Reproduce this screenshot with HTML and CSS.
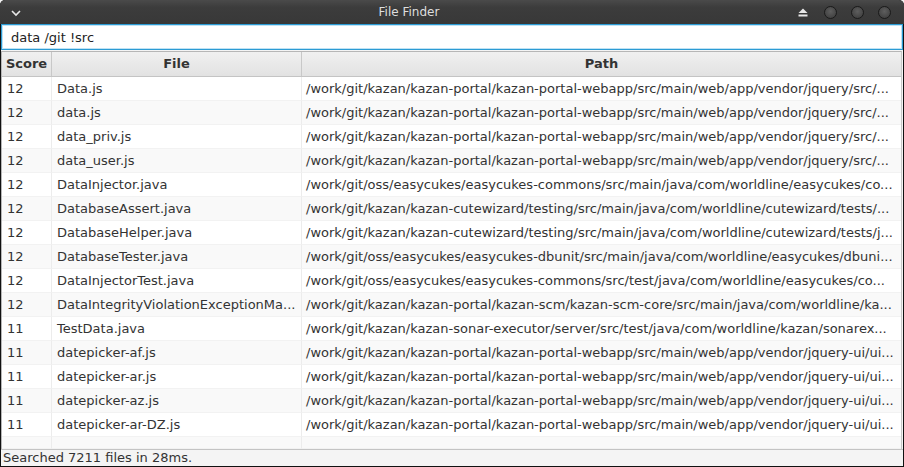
FILE: index.html
```html
<!DOCTYPE html>
<html>
<head>
<meta charset="utf-8">
<link rel="stylesheet" href="styles.css">
</head>
<body>
<div class="window">
  <div class="titlebar">
    <svg class="menu-icon" width="12" height="8" viewBox="0 0 12 8"><path d="M2 2 L6 6 L10 2" fill="none" stroke="#e8e8e8" stroke-width="1.6"/></svg>
    <div class="title">File Finder</div>
    <div class="controls">
      <svg class="eject" width="10" height="9" viewBox="0 0 10 9"><path d="M5 0.5 L9.5 5 L0.5 5 Z" fill="#e8e8e8"/><rect x="0.5" y="6.5" width="9" height="2" fill="#e8e8e8"/></svg>
      <span class="dot"></span>
      <span class="dot"></span>
      <span class="dot"></span>
    </div>
  </div>
  <div class="content">
    <div class="search">data /git !src</div>
    <div class="table">
      <div class="thead">
        <div class="c score">Score</div>
        <div class="c file">File</div>
        <div class="c path">Path</div>
      </div>
      <div class="tbody">
        <div class="row"><div class="c score">12</div><div class="c file">Data.js</div><div class="c path">/work/git/kazan/kazan-portal/kazan-portal-webapp/src/main/web/app/vendor/jquery/src/...</div></div>
        <div class="row"><div class="c score">12</div><div class="c file">data.js</div><div class="c path">/work/git/kazan/kazan-portal/kazan-portal-webapp/src/main/web/app/vendor/jquery/src/...</div></div>
        <div class="row"><div class="c score">12</div><div class="c file">data_priv.js</div><div class="c path">/work/git/kazan/kazan-portal/kazan-portal-webapp/src/main/web/app/vendor/jquery/src/...</div></div>
        <div class="row"><div class="c score">12</div><div class="c file">data_user.js</div><div class="c path">/work/git/kazan/kazan-portal/kazan-portal-webapp/src/main/web/app/vendor/jquery/src/...</div></div>
        <div class="row"><div class="c score">12</div><div class="c file">DataInjector.java</div><div class="c path">/work/git/oss/easycukes/easycukes-commons/src/main/java/com/worldline/easycukes/co...</div></div>
        <div class="row"><div class="c score">12</div><div class="c file">DatabaseAssert.java</div><div class="c path">/work/git/kazan/kazan-cutewizard/testing/src/main/java/com/worldline/cutewizard/tests/...</div></div>
        <div class="row"><div class="c score">12</div><div class="c file">DatabaseHelper.java</div><div class="c path">/work/git/kazan/kazan-cutewizard/testing/src/main/java/com/worldline/cutewizard/tests/j...</div></div>
        <div class="row"><div class="c score">12</div><div class="c file">DatabaseTester.java</div><div class="c path">/work/git/oss/easycukes/easycukes-dbunit/src/main/java/com/worldline/easycukes/dbuni...</div></div>
        <div class="row"><div class="c score">12</div><div class="c file">DataInjectorTest.java</div><div class="c path">/work/git/oss/easycukes/easycukes-commons/src/test/java/com/worldline/easycukes/co...</div></div>
        <div class="row"><div class="c score">12</div><div class="c file">DataIntegrityViolationExceptionMa...</div><div class="c path">/work/git/kazan/kazan-portal/kazan-scm/kazan-scm-core/src/main/java/com/worldline/ka...</div></div>
        <div class="row"><div class="c score">11</div><div class="c file">TestData.java</div><div class="c path">/work/git/kazan/kazan-sonar-executor/server/src/test/java/com/worldline/kazan/sonarex...</div></div>
        <div class="row"><div class="c score">11</div><div class="c file">datepicker-af.js</div><div class="c path">/work/git/kazan/kazan-portal/kazan-portal-webapp/src/main/web/app/vendor/jquery-ui/ui...</div></div>
        <div class="row"><div class="c score">11</div><div class="c file">datepicker-ar.js</div><div class="c path">/work/git/kazan/kazan-portal/kazan-portal-webapp/src/main/web/app/vendor/jquery-ui/ui...</div></div>
        <div class="row"><div class="c score">11</div><div class="c file">datepicker-az.js</div><div class="c path">/work/git/kazan/kazan-portal/kazan-portal-webapp/src/main/web/app/vendor/jquery-ui/ui...</div></div>
        <div class="row"><div class="c score">11</div><div class="c file">datepicker-ar-DZ.js</div><div class="c path">/work/git/kazan/kazan-portal/kazan-portal-webapp/src/main/web/app/vendor/jquery-ui/ui...</div></div>
        <div class="row filler"><div class="c score"></div><div class="c file"></div><div class="c path"></div></div>
      </div>
    </div>
    <div class="status">Searched 7211 files in 28ms.</div>
  </div>
</div>
</body>
</html>
```

FILE: styles.css
```css
html, body {
  margin: 0;
  padding: 0;
  background: #f4f4f4;
}
body {
  width: 904px;
  height: 467px;
  overflow: hidden;
  font-family: "DejaVu Sans", sans-serif;
  font-size: 12px;
}
.window {
  width: 904px;
  height: 467px;
  box-sizing: border-box;
  background: #111;
  border-radius: 5px 5px 0 0;
  display: flex;
  flex-direction: column;
  overflow: hidden;
}
.titlebar {
  height: 24px;
  flex: none;
  position: relative;
  display: flex;
  align-items: center;
  background: linear-gradient(#4a4a4a, #3c3c3c 30%, #383838);
  border-radius: 5px 5px 0 0;
  color: #dedede;
}
.menu-icon {
  margin-left: 10px;
  margin-top: 1px;
  flex: none;
}
.title {
  flex: 1;
  text-align: center;
  font-size: 12px;
  margin-right: 108px;
}
.controls {
  position: absolute;
  right: 0;
  top: 0;
  height: 24px;
  display: flex;
  align-items: center;
  gap: 14px;
  padding-right: 13px;
}
.eject {
  margin-right: 2px;
}
.dot {
  width: 13px;
  height: 13px;
  box-sizing: border-box;
  border-radius: 50%;
  background: radial-gradient(circle at 50% 40%, #5e5e5e, #444 70%);
  border: 1px solid #1a1a1a;
}
.content {
  flex: 1;
  margin: 0 1px 1px 1px;
  background: #f4f4f4;
  display: flex;
  flex-direction: column;
  min-height: 0;
}
.search {
  height: 26px;
  box-sizing: border-box;
  border: 1px solid #2b9bd4;
  box-shadow: inset 0 0 0 1px #bfe2f4;
  background: #fff;
  padding: 5px 0 0 9px;
  font-size: 13px;
  color: #222;
  flex: none;
}
.table {
  flex: 1;
  margin: 1px 1px 0 0;
  border: 1px solid #b6b6b6;
  border-bottom: none;
  border-right-color: #c8c8c8;
  background: #fff;
  display: flex;
  flex-direction: column;
  min-height: 0;
  overflow: hidden;
}
.thead {
  display: flex;
  height: 24px;
  flex: none;
  background: linear-gradient(#f0f0f0, #e2e2e2);
  border-bottom: 1px solid #c4c4c4;
  font-weight: bold;
  color: #333;
  font-size: 13px;
}
.thead .c {
  text-align: center;
  line-height: 24px;
  border-right: 1px solid #c8c8c8;
}
.thead .path {
  border-right: none;
}
.c {
  box-sizing: border-box;
  white-space: nowrap;
  overflow: hidden;
}
.score { width: 50px; flex: none; }
.file { width: 250px; flex: none; }
.path { flex: 1; }
.tbody {
  flex: 1;
  display: flex;
  flex-direction: column;
}
.row {
  display: flex;
  height: 24px;
  flex: none;
  font-size: 13px;
  color: #333;
  background: #fff;
}
.row:nth-child(even) {
  background: #f9f9f9;
}
.row .c {
  padding-left: 5px;
  border-right: 1px solid #ececec;
  border-bottom: 1px solid #f2f2f2;
  line-height: 23px;
}
.row .path {
  border-right: none;
  padding-left: 4px;
}
.row.filler {
  flex: 1;
}
.status {
  height: 16px;
  flex: none;
  border-top: 1px solid #c4c4c4;
  padding-left: 2px;
  font-size: 13px;
  line-height: 16px;
  color: #333;
  background: #f4f4f4;
}
```
